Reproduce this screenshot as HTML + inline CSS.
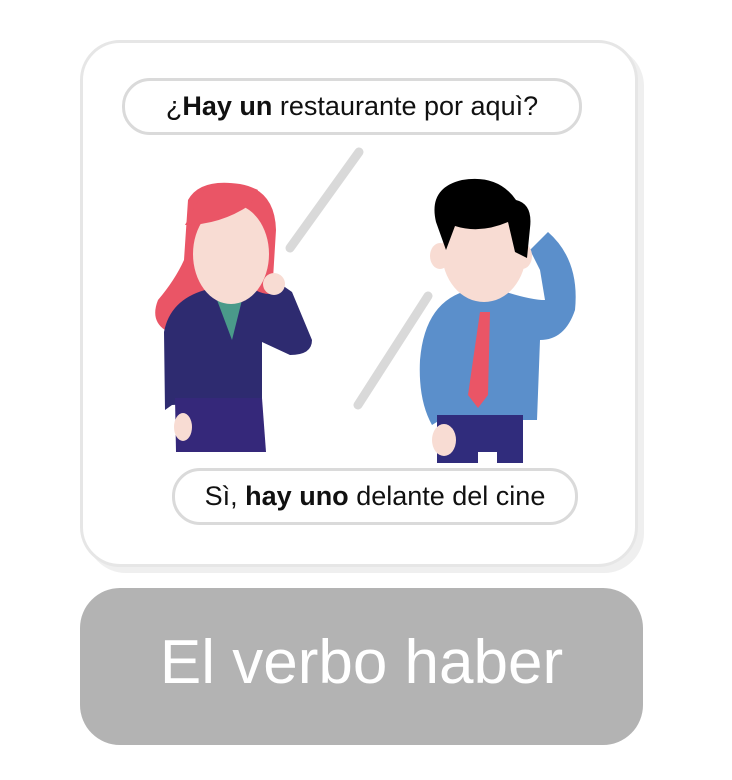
<!DOCTYPE html>
<html><head><meta charset="utf-8"><style>
html,body{margin:0;padding:0;background:#fff;width:732px;height:780px;overflow:hidden;font-family:"Liberation Sans",sans-serif}
.card{position:absolute;left:80px;top:40px;width:552px;height:521px;border:3px solid #e6e6e6;border-radius:40px;box-shadow:6px 6px 0 #efefef;background:#fff}
.bub{position:absolute;border:3px solid #dadada;border-radius:28px;background:#fff;text-align:center;font-size:27px;color:#111;line-height:51px;white-space:nowrap}
.bub b{font-weight:900}
.btn{position:absolute;left:80px;top:588px;width:563px;height:157px;border-radius:40px;background:#b3b3b3;color:#fff;font-size:62px;text-align:center;line-height:150px}
svg{position:absolute;left:0;top:0}
</style></head><body>
<div class="card"></div>
<svg width="732" height="780">
<g stroke="#d9d9d9" stroke-width="9" stroke-linecap="round">
<line x1="359" y1="152" x2="290" y2="248"/>
<line x1="428" y1="296" x2="358" y2="405"/>
</g>
<!-- woman -->
<path d="M188 200 Q200 178 240 184 Q275 190 276 230 L272 295 Q262 300 255 310 L200 310 Q175 325 165 330 Q150 320 158 300 Q175 280 184 260 Z" fill="#ea5566"/>
<path d="M164 332 Q170 300 205 290 L255 290 Q275 300 282 285 L292 292 L312 340 Q312 355 290 355 L262 342 L262 400 L172 405 L165 410 Z" fill="#2e2b70"/>
<path d="M214 292 L244 292 L232 340 Z" fill="#4a9a8a"/>
<path d="M175 398 L262 398 L266 452 L176 452 Z" fill="#35287a"/>
<ellipse cx="231" cy="254" rx="38" ry="50" fill="#f8dcd3"/>
<path d="M185 225 Q220 225 250 205 L258 190 Q235 180 205 188 Z" fill="#ea5566"/>
<circle cx="274" cy="284" r="11" fill="#f8dcd3"/>
<ellipse cx="183" cy="427" rx="9" ry="14" fill="#f8dcd3"/>
<!-- man -->
<path d="M420 360 Q425 300 470 290 L500 290 Q530 300 545 300 L540 270 L530 250 L548 232 Q580 260 575 310 Q565 340 540 340 L537 420 L440 420 L432 425 Q418 400 420 360 Z" fill="#5b8fcb"/>
<path d="M437 415 L523 415 L523 463 L497 463 L497 452 L478 452 L478 463 L437 463 Z" fill="#302c7c"/>
<ellipse cx="484" cy="252" rx="42" ry="50" fill="#f8dcd3"/>
<ellipse cx="440" cy="256" rx="10" ry="13" fill="#f8dcd3"/>
<ellipse cx="522" cy="256" rx="10" ry="13" fill="#f8dcd3"/>
<path d="M436 222 Q428 188 462 180 Q498 174 516 200 Q533 204 530 228 L527 258 L515 252 L508 222 Q480 234 455 226 L446 250 Z" fill="#000"/>
<path d="M480 312 L490 312 L488 395 L478 408 L468 395 Z" fill="#ea5566"/>
<ellipse cx="444" cy="440" rx="12" ry="16" fill="#f8dcd3"/>
</svg>
<div class="bub" style="left:122px;top:78px;width:454px;height:51px">¿<b>Hay un</b> restaurante por aquì?</div>
<div class="bub" style="left:172px;top:468px;width:400px;height:51px">Sì, <b>hay uno</b> delante del cine</div>
<div class="btn">El verbo haber</div>
</body></html>
